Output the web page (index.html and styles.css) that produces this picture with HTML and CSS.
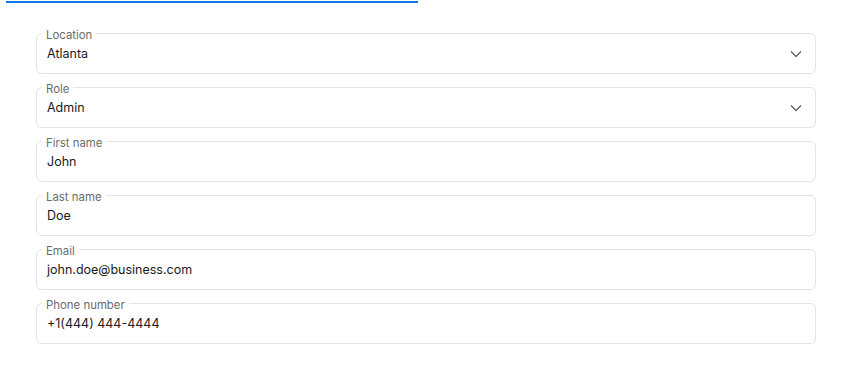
FILE: index.html
```html
<!DOCTYPE html>
<html lang="en">
<head>
    <meta charset="UTF-8">
    <meta name="viewport" content="width=device-width, initial-scale=1.0">
    <title>Profile</title>
    <link rel="stylesheet" href="styles.css">
</head>
<body>
    <div class="progress"></div>

    <form class="profile-form">
        <fieldset class="field">
            <legend>Location</legend>
            <div class="control">
                <span class="value">Atlanta</span>
                <svg class="chevron" width="12" height="12" viewBox="0 0 12 12"><path d="M1 3.5 L6 8.5 L11 3.5" fill="none" stroke="#5f6368" stroke-width="1.3"/></svg>
            </div>
        </fieldset>

        <fieldset class="field">
            <legend>Role</legend>
            <div class="control">
                <span class="value">Admin</span>
                <svg class="chevron" width="12" height="12" viewBox="0 0 12 12"><path d="M1 3.5 L6 8.5 L11 3.5" fill="none" stroke="#5f6368" stroke-width="1.3"/></svg>
            </div>
        </fieldset>

        <fieldset class="field">
            <legend>First name</legend>
            <div class="control"><span class="value">John</span></div>
        </fieldset>

        <fieldset class="field">
            <legend>Last name</legend>
            <div class="control"><span class="value">Doe</span></div>
        </fieldset>

        <fieldset class="field">
            <legend>Email</legend>
            <div class="control"><span class="value">john.doe@business.com</span></div>
        </fieldset>

        <fieldset class="field">
            <legend>Phone number</legend>
            <div class="control"><span class="value">+1(444) 444-4444</span></div>
        </fieldset>
    </form>
</body>
</html>
```

FILE: styles.css
```css
body {
    margin: 0;
    font-family: Inter, "Noto Sans", sans-serif;
    color: #1a1a1a;
    background: #fff;
}
.progress {
    margin: 1px 0 0 6px;
    width: 412px;
    height: 2px;
    background-color: #0a7be4;
}
.profile-form {
    display: flex;
    flex-direction: column;
    gap: 5px;
    padding: 22px 30px 0 36px;
}
.field {
    margin: 0;
    padding: 0 10px 11px 10px;
    border: 1px solid #e3e3e3;
    border-radius: 6px;
    min-width: 0;
}
.field legend {
    padding: 4px 4px 0;
    margin-left: -5px;
    font-size: 11.4px;
    line-height: 12px;
    color: #6b6b6b;
}
.control {
    display: flex;
    align-items: center;
    justify-content: space-between;
    padding-top: 5px;
}
.value {
    font-size: 12.5px;
    line-height: 16px;
}
.chevron {
    margin-right: 3px;
}
```
